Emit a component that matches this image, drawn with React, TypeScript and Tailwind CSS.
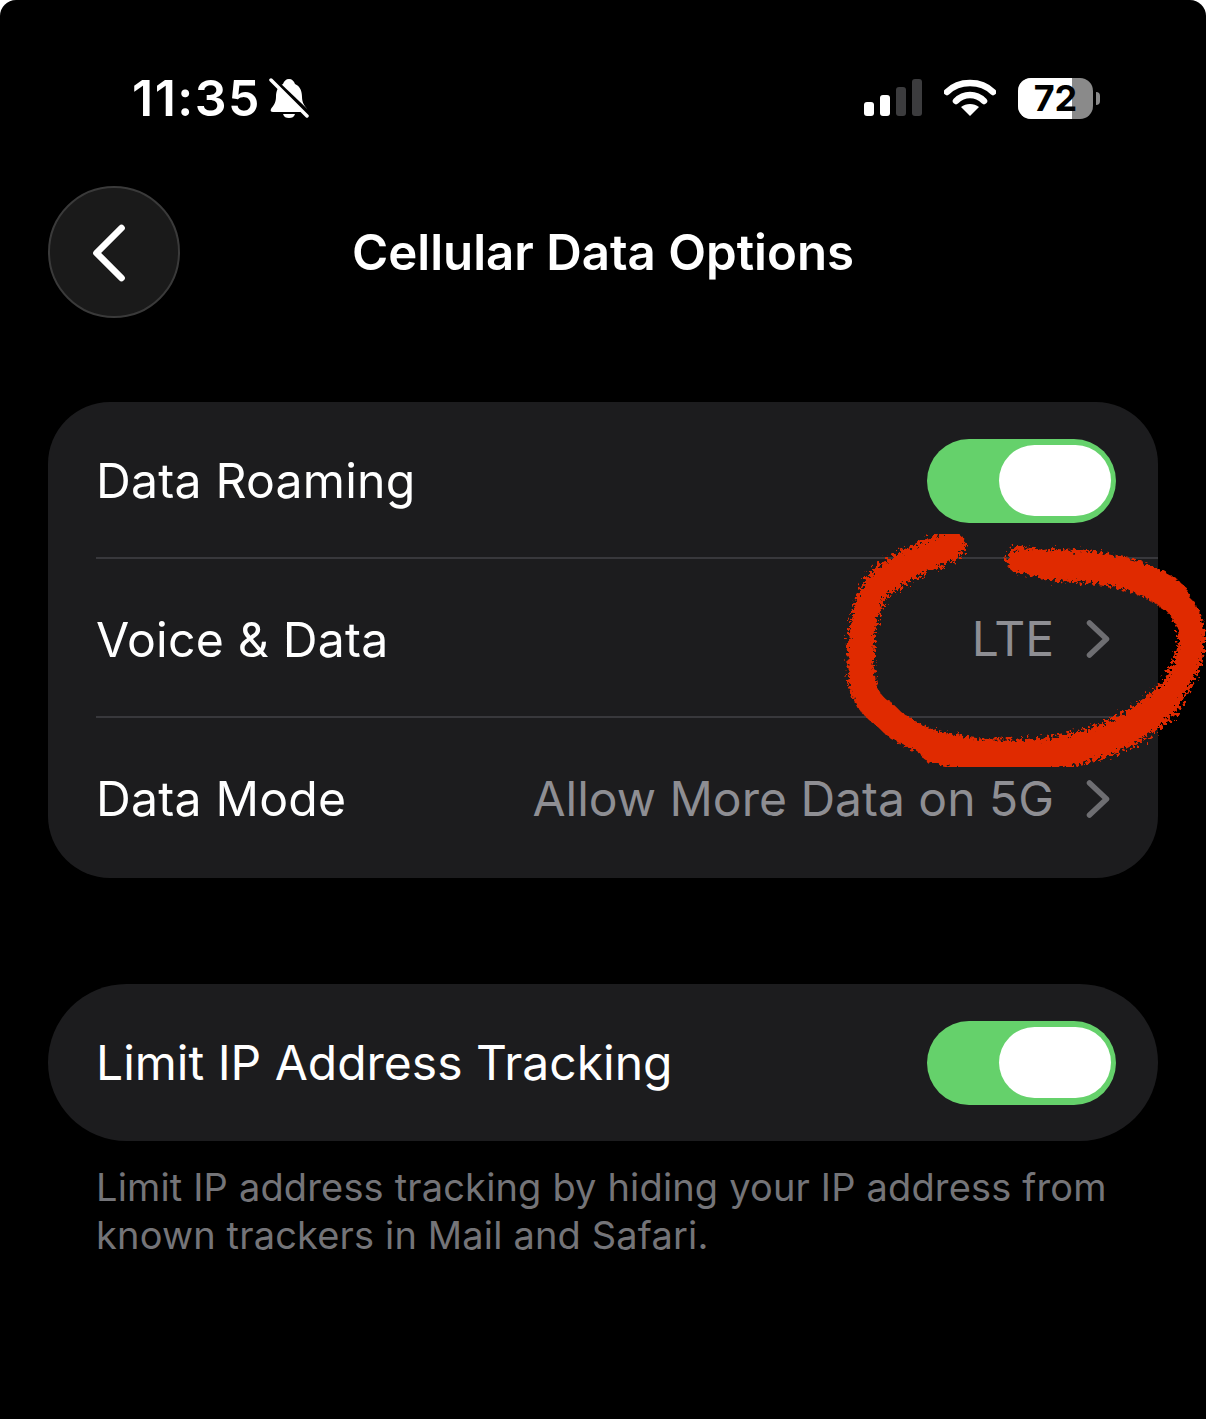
import React from 'react'
import { ChevronLeft } from 'lucide-react'

function Toggle() {
  return (
    <div className="flex h-[84px] w-[189px] items-center justify-end rounded-full bg-[#65d16b] pr-[5px]">
      <div className="h-[71px] w-[112px] rounded-full bg-white" />
    </div>
  )
}

function Chevron() {
  return (
    <svg width="24" height="38" viewBox="0 0 24 38" fill="none" className="ml-[32px] mr-[6px]">
      <path d="M3.5 3L20.5 19L3.5 35" stroke="#6e6e72" strokeWidth="5.5" strokeLinecap="round" strokeLinejoin="round" />
    </svg>
  )
}

function Row({ label, value, className }: { label: string; value: string; className: string }) {
  return (
    <div className={`flex items-center justify-between pr-[42px] ${className}`}>
      <span className="mt-[2px] text-[48.2px] tracking-[0.2px] text-white">{label}</span>
      <div className="flex items-center">
        <span className="text-[48px] text-[#8e8e93]">{value}</span>
        <Chevron />
      </div>
    </div>
  )
}

function StatusBar() {
  return (
    <div className="flex h-[78px] items-center justify-between pl-[132px] pr-[106px]">
      <div className="flex items-center gap-[8px]">
        <span className="text-[50px] font-semibold leading-none tracking-[1.5px] text-white">11:35</span>
        <svg width="40" height="42" viewBox="0 0 40 42">
          <path d="M20 2c3 0 5 2 6 5 5 2 7 7 7 13 0 6 3 9 5 12 1 2 0 3-2 3H4c-2 0-3-1-2-3 2-3 5-6 5-12 0-6 2-11 7-13 1-3 3-5 6-5z" fill="white" />
          <path d="M14 37h12c-1 3-3 4-6 4s-5-1-6-4z" fill="white" />
          <path d="M-2 -3L40 37" stroke="black" strokeWidth="5" />
          <path d="M2 3l36 36" stroke="white" strokeWidth="3.5" strokeLinecap="round" />
        </svg>
      </div>
      <div className="flex items-center">
        <svg width="58" height="38" viewBox="0 0 58 38">
          <rect x="0" y="23" width="10" height="14" rx="3" fill="white" />
          <rect x="16" y="16" width="10" height="21" rx="3" fill="white" />
          <rect x="32" y="8" width="10" height="29" rx="3" fill="#3c3c3e" />
          <rect x="48" y="0" width="10" height="37" rx="3" fill="#3c3c3e" />
        </svg>
        <svg width="52" height="38" viewBox="0 0 52 38" className="ml-[22px]">
          <path d="M3 13C15 1 37 1 49 13" stroke="white" strokeWidth="6.5" fill="none" strokeLinecap="round" />
          <path d="M12 22C20 14 32 14 40 22" stroke="white" strokeWidth="6.5" fill="none" strokeLinecap="round" />
          <path d="M26 37L17 28c5-4 13-4 18 0z" fill="white" />
        </svg>
        <div className="relative ml-[22px] h-[41px] w-[75px] overflow-hidden rounded-[13px] bg-[#8a8a8a]">
          <div className="h-full w-[54px] bg-white" />
          <span className="absolute inset-0 flex items-center justify-center text-[36px] font-bold leading-none text-black">72</span>
        </div>
        <div className="ml-[3px] h-[13px] w-[4px] rounded-r-full bg-[#8a8a8a]" />
      </div>
    </div>
  )
}

export default function App() {
  return (
    <main className="relative h-[1419px] w-[1206px] overflow-hidden rounded-t-[16px] bg-black font-['Inter',sans-serif]">
      <div className="pt-[59px]">
        <StatusBar />
      </div>

      <header className="mt-[49px] grid grid-cols-[132px_1fr_132px] items-center px-[48px]">
        <button className="flex h-[132px] w-[132px] items-center justify-center rounded-full border-2 border-[#3a3a3a] bg-[#1a1a1a]">
          <ChevronLeft size={100} color="white" strokeWidth={1.6} className="mr-[10px] mt-[2px]" />
        </button>
        <h1 className="mt-[2px] text-center text-[49.2px] font-semibold text-white">Cellular Data Options</h1>
        <div />
      </header>

      <section className="mx-[48px] mt-[84px] rounded-[62px] bg-[#1c1c1e]">
        <div className="pl-[48px]">
          <div className="flex h-[157px] items-center justify-between border-b-2 border-[#38383c] pr-[42px] pt-[2px]">
            <span className="mt-[2px] text-[48.2px] tracking-[0.2px] text-white">Data Roaming</span>
            <Toggle />
          </div>
          <Row label="Voice & Data" value="LTE" className="h-[159px] border-b-2 border-[#38383c] pt-[3px]" />
          <Row label="Data Mode" value="Allow More Data on 5G" className="h-[160px] pt-[1px]" />
        </div>
      </section>

      <section className="mx-[48px] mt-[106px] flex h-[157px] items-center justify-between rounded-full bg-[#1c1c1e] pl-[48px] pr-[42px]">
        <span className="text-[48px] text-white">Limit IP Address Tracking</span>
        <Toggle />
      </section>

      <p className="ml-[96px] mr-[90px] mt-[22px] text-[38px] leading-[48px] tracking-[0.16px] text-[#747478]">
        Limit IP address tracking by hiding your IP address from known trackers in Mail and Safari.
      </p>

      {/* red marker circle drawn on top of the screenshot */}
      <svg className="pointer-events-none absolute left-0 top-0" width="1206" height="1419" viewBox="0 0 1206 1419" fill="none">
        <defs>
          <filter id="rough" x="-5%" y="-5%" width="110%" height="110%">
            <feTurbulence type="fractalNoise" baseFrequency="0.3" numOctaves="3" seed="7" />
            <feDisplacementMap in="SourceGraphic" scale="14" />
            <feGaussianBlur stdDeviation="0.7" />
          </filter>
        </defs>
        <g stroke="#e02a00" strokeLinecap="round" filter="url(#rough)">
          <path
            d="M952 545C930 552 900 565 880 583C865 600 861 630 861 660C860 690 868 705 885 715C900 732 930 745 960 750C1000 758 1040 756 1080 745C1115 735 1145 722 1168 697C1185 675 1195 650 1190 625C1180 595 1150 575 1110 570C1080 566 1050 566 1020 560"
            strokeWidth="27"
          />
          <path d="M935 747C985 760 1045 760 1100 742C1125 733 1145 720 1165 702" strokeWidth="33" />
          <path d="M945 548C925 556 905 564 885 580" strokeWidth="31" />
          <path d="M1050 565C1095 566 1140 570 1172 596" strokeWidth="32" />
        </g>
      </svg>
    </main>
  )
}
